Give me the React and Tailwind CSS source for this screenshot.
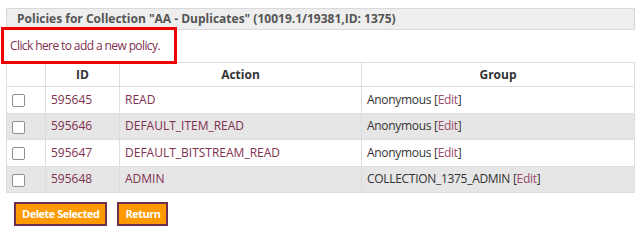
import React from "react";

const policies = [
  { id: "595645", action: "READ", group: "Anonymous" },
  { id: "595646", action: "DEFAULT_ITEM_READ", group: "Anonymous" },
  { id: "595647", action: "DEFAULT_BITSTREAM_READ", group: "Anonymous" },
  { id: "595648", action: "ADMIN", group: "COLLECTION_1375_ADMIN" },
];

const Checkbox = () => (
  <span className="inline-block w-[13px] h-[13px] border border-[#8f8f8f] rounded-[2px] bg-white align-middle" />
);

export default function App() {
  return (
    <div
      className="w-[640px] h-[244px] bg-white text-[12px] text-[#333]"
      style={{ fontFamily: '"Open Sans", "Noto Sans", sans-serif' }}
    >
      <div className="pt-[8px] pl-[6px] pr-[5px]">
        {/* title bar */}
        <div className="h-[22px] bg-[#eeeeee] border border-[#d9d9d9] flex items-center pl-[10px] font-bold text-[#555]">
          Policies for Collection "AA - Duplicates" (10019.1/19381,ID: 1375)
        </div>
      </div>

      <div className="relative h-[32px]">
        <div className="absolute left-[1px] top-[-3px] w-[176px] h-[37px] border-[3px] border-[#f00000] flex items-center pl-[6px] whitespace-nowrap">
          <a href="#" className="text-[#80304f] tracking-[-0.6px]">
            Click here to add a new policy.
          </a>
        </div>
      </div>

      <div className="pl-[6px] pr-[5px]">
        <table className="w-full border-collapse border border-[#dddddd]">
          <thead>
            <tr className="h-[24px] bg-white">
              <th className="w-[39px] border border-[#dddddd]"></th>
              <th className="w-[74px] border border-[#dddddd] font-bold text-center">ID</th>
              <th className="w-[242px] border border-[#dddddd] font-bold text-center">Action</th>
              <th className="border border-[#dddddd] font-bold text-center">Group</th>
            </tr>
          </thead>
          <tbody>
            {policies.map((p, i) => (
              <tr key={p.id} className={`h-[26.5px] ${i % 2 ? "bg-[#e6e6e6]" : "bg-white"}`}>
                <td className="border border-[#dddddd] pl-[5px]">
                  <Checkbox />
                </td>
                <td className="border border-[#dddddd] pl-[5px] text-[#80304f]">{p.id}</td>
                <td className="border border-[#dddddd] pl-[5px] text-[#80304f]">{p.action}</td>
                <td className="border border-[#dddddd] pl-[5px] text-[#333] tracking-[-0.3px]">
                  {p.group} [<span className="text-[#9a4a6a]">Edit</span>]
                </td>
              </tr>
            ))}
          </tbody>
        </table>

        <div className="flex gap-[10px] mt-[9px] pl-[8px]">
          <button className="h-[24px] px-[6px] bg-[#ff9900] border-2 border-[#6b2f4f] text-white font-bold text-[11px] tracking-[-0.5px]">
            Delete Selected
          </button>
          <button className="h-[24px] px-[6px] bg-[#ff9900] border-2 border-[#6b2f4f] text-white font-bold text-[11px] tracking-[-0.5px]">
            Return
          </button>
        </div>
      </div>
    </div>
  );
}
